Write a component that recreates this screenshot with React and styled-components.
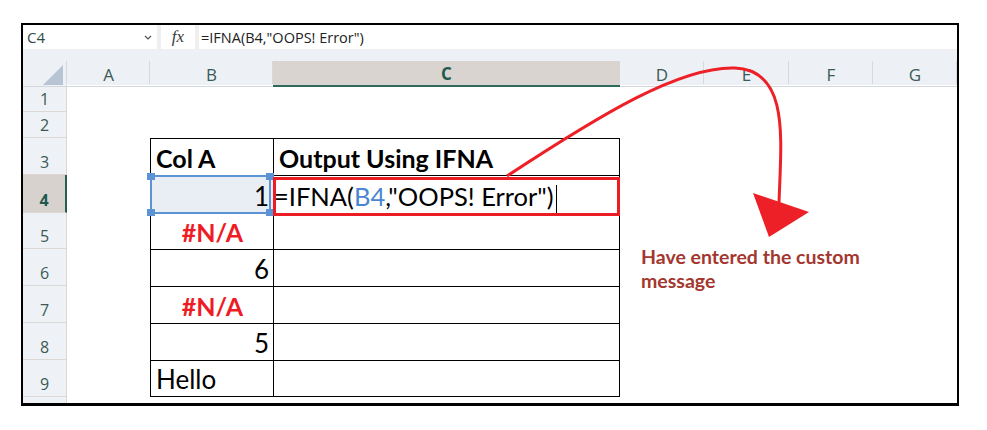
import React from 'react';
import styled, { createGlobalStyle } from 'styled-components';

const GlobalStyle = createGlobalStyle`
  html, body {
    margin: 0;
    padding: 0;
    background: #ffffff;
    font-family: "Open Sans", "Liberation Sans", sans-serif;
  }
`;

const Page = styled.div`
  position: relative;
  width: 987px;
  height: 430px;
  padding: 23px 0 0 21px;
  box-sizing: border-box;
`;

// the black frame round the whole sheet
const Frame = styled.div`
  width: 938px;
  height: 383px;
  box-sizing: border-box;
  border: 2px solid #000;
  border-bottom-width: 3px;
  overflow: hidden;
  display: flex;
  flex-direction: column;
`;

const FormulaBar = styled.div`
  height: 25px;
  flex-shrink: 0;
  display: flex;
  gap: 4px;
  background: #efefef;
  padding-bottom: 1px;
  box-sizing: border-box;
`;

const NameBox = styled.div`
  width: 134px;
  background: #fff;
  display: flex;
  align-items: center;
  justify-content: space-between;
  padding: 0 5px 0 4px;
  box-sizing: border-box;
  font-size: 15px;
  color: #2f4b47;
`;

const FxBox = styled.div`
  width: 34px;
  background: #fff;
  display: flex;
  align-items: center;
  justify-content: center;
  font-family: "Liberation Serif", serif;
  font-style: italic;
  font-size: 17px;
  color: #3a3a3a;
`;

const FormulaInput = styled.div`
  flex: 1;
  background: #fff;
  display: flex;
  align-items: center;
  padding-left: 2px;
  font-size: 14.5px;
  color: #222;
`;

const COLS = '44px 83px 123px 347px 84px 85px 84px 1fr';

const HeaderBand = styled.div`
  height: 35px;
  flex-shrink: 0;
  padding-top: 11px;
  box-sizing: border-box;
  background: #edf1f5;
  display: grid;
  grid-template-columns: ${COLS};
`;

const ColHead = styled.div`
  position: relative;
  display: flex;
  align-items: center;
  justify-content: center;
  font-size: 17px;
  padding-top: 1px;
  box-sizing: border-box;
  border-bottom: ${p => (p.$active ? '2px solid #2d6a5c' : '1px solid #d3d7dc')};
  background: ${p => (p.$active ? '#d9d4d0' : 'transparent')};
  color: ${p => (p.$active ? '#1f5a4d' : '#3b5a55')};
  font-weight: ${p => (p.$active ? 700 : 400)};

  &::after {
    content: '';
    position: absolute;
    right: 0;
    top: 0;
    bottom: 2px;
    width: 1px;
    background: ${p => (p.$active ? 'transparent' : '#d9d9dc')};
  }
`;

const Corner = styled(ColHead)`
  align-items: flex-end;
  justify-content: flex-end;
  padding: 0 4px 1px 0;
`;

const SheetRow = styled.div`
  display: grid;
  grid-template-columns: ${COLS};
  height: ${p => p.$h}px;
  flex-shrink: 0;
`;

const RowHead = styled.div`
  display: flex;
  align-items: flex-end;
  justify-content: center;
  padding-bottom: 3px;
  box-sizing: border-box;
  font-size: 16px;
  line-height: 18px;
  background: ${p => (p.$active ? '#d7d2cd' : '#eef2f6')};
  color: ${p => (p.$active ? '#1f5a4d' : '#3b5a55')};
  font-weight: ${p => (p.$active ? 700 : 400)};
  border-bottom: 1px solid #ddd7d4;
  border-right: ${p => (p.$active ? '2px solid #275e52' : '1px solid #ddd7d4')};
`;

const Cell = styled.div`
  position: relative;
  display: flex;
  align-items: flex-end;
  justify-content: ${p => p.$align || 'flex-start'};
  padding: 0 4px 3px ${p => (p.$tight ? 0 : 5)}px;
  box-sizing: border-box;
  font-family: Lato, "Open Sans", sans-serif;
  font-size: ${p => (p.$bold ? 25 : p.$tight ? 25.5 : 26)}px;
  line-height: 27px;
  white-space: nowrap;
  font-weight: ${p => (p.$bold ? 700 : 400)};
  color: ${p => (p.$error ? '#ee1c25' : '#000')};
  background: ${p => (p.$selected ? '#e9eef4' : 'transparent')};
  border-top: ${p => (p.$boxed ? '1px solid #000' : 'none')};
  border-left: ${p => (p.$boxed ? '1px solid #000' : 'none')};
  border-right: ${p => (p.$edgeRight ? '1px solid #000' : 'none')};
  border-bottom: ${p => (p.$edgeBottom ? '1px solid #000' : 'none')};
`;

const Selection = styled.div`
  position: absolute;
  z-index: 2;
  top: -1px;
  left: -1px;
  right: 2px;
  bottom: -1px;
  border: 2px solid #5b93d5;
`;

const Handle = styled.span`
  position: absolute;
  width: 8px;
  height: 7px;
  background: #5b93d5;
  ${p => (p.$v === 'top' ? 'top: -4px;' : 'bottom: -4px;')}
  ${p => (p.$h === 'left' ? 'left: -5px;' : 'right: -5px;')}
`;

const RedBox = styled.div`
  position: absolute;
  z-index: 3;
  top: 1px;
  left: -1px;
  right: -1px;
  bottom: -3px;
  border: 3px solid #ec1c24;
`;

const Ref = styled.span`
  color: #4a86d2;
`;

const Caret = styled.span`
  display: inline-block;
  width: 1px;
  height: 30px;
  margin: 0 0 -5px 2px;
  background: #000;
`;

const Note = styled.div`
  position: absolute;
  left: 641px;
  top: 245px;
  width: 260px;
  font-family: Lato, "Open Sans", sans-serif;
  font-weight: 700;
  font-size: 19.5px;
  line-height: 24px;
  color: #a3372f;
`;

const Overlay = styled.svg`
  position: absolute;
  left: 0;
  top: 0;
  z-index: 5;
  pointer-events: none;
`;

const letters = ['A', 'B', 'C', 'D', 'E', 'F', 'G'];

const rows = [
  { n: 1, h: 27 },
  { n: 2, h: 26 },
  { n: 3, h: 37, b: { text: 'Col A', bold: true }, c: { text: 'Output Using IFNA', bold: true } },
  { n: 4, h: 38, b: { text: '1', align: 'flex-end', selected: true }, c: { formula: true } },
  { n: 5, h: 36, b: { text: '#N/A', align: 'center', bold: true, error: true } },
  { n: 6, h: 37, b: { text: '6', align: 'flex-end' } },
  { n: 7, h: 37, b: { text: '#N/A', align: 'center', bold: true, error: true } },
  { n: 8, h: 37, b: { text: '5', align: 'flex-end' } },
  { n: 9, h: 37, b: { text: 'Hello' }, c: {}, last: true },
  { n: 10, h: 37, hidden: true },
];

function Chevron() {
  return (
    <svg width="8" height="5" viewBox="0 0 8 5">
      <path d="M1 1 L4 4 L7 1" fill="none" stroke="#555" strokeWidth="1.2" />
    </svg>
  );
}

function SheetLine({ row }) {
  const boxed = row.n >= 3 && row.n <= 9;
  const b = row.b || {};
  const c = row.c || {};
  return (
    <SheetRow $h={row.h}>
      <RowHead $active={row.n === 4}>{row.hidden ? '' : row.n}</RowHead>
      <Cell />
      <Cell
        $boxed={boxed}
        $edgeBottom={row.last}
        $align={b.align}
        $bold={b.bold}
        $error={b.error}
        $selected={b.selected}
      >
        {b.text}
        {b.selected && (
          <Selection>
            <Handle $v="top" $h="left" />
            <Handle $v="top" $h="right" />
            <Handle $v="bottom" $h="left" />
            <Handle $v="bottom" $h="right" />
          </Selection>
        )}
      </Cell>
      <Cell $boxed={boxed} $edgeRight={boxed} $edgeBottom={row.last} $bold={c.bold} $tight={c.formula}>
        {c.formula ? (
          <>
            =IFNA(<Ref>B4</Ref>,"OOPS! Error")<Caret />
            <RedBox />
          </>
        ) : (
          c.text
        )}
      </Cell>
      <Cell />
      <Cell />
      <Cell />
      <Cell />
    </SheetRow>
  );
}

export default function App() {
  return (
    <Page>
      <GlobalStyle />
      <Frame>
        <FormulaBar>
          <NameBox>
            C4
            <Chevron />
          </NameBox>
          <FxBox>fx</FxBox>
          <FormulaInput>=IFNA(B4,"OOPS! Error")</FormulaInput>
        </FormulaBar>
        <HeaderBand>
          <Corner>
            <svg width="20" height="20" viewBox="0 0 20 20">
              <polygon points="20,0 20,20 0,20" fill="#b6c4d3" />
            </svg>
          </Corner>
          {letters.map(l => (
            <ColHead key={l} $active={l === 'C'}>
              {l}
            </ColHead>
          ))}
        </HeaderBand>
        {rows.map(r => (
          <SheetLine key={r.n} row={r} />
        ))}
      </Frame>
      <Note>Have entered the custom message</Note>
      <Overlay width="987" height="430" viewBox="0 0 987 430">
        <path
          d="M507 176 C600 115 680 66 735 68 C790 70 781 140 779 203"
          fill="none"
          stroke="#ee2027"
          strokeWidth="3"
        />
        <polygon points="753,193 809,212 769,237" fill="#ee2027" />
      </Overlay>
    </Page>
  );
}
